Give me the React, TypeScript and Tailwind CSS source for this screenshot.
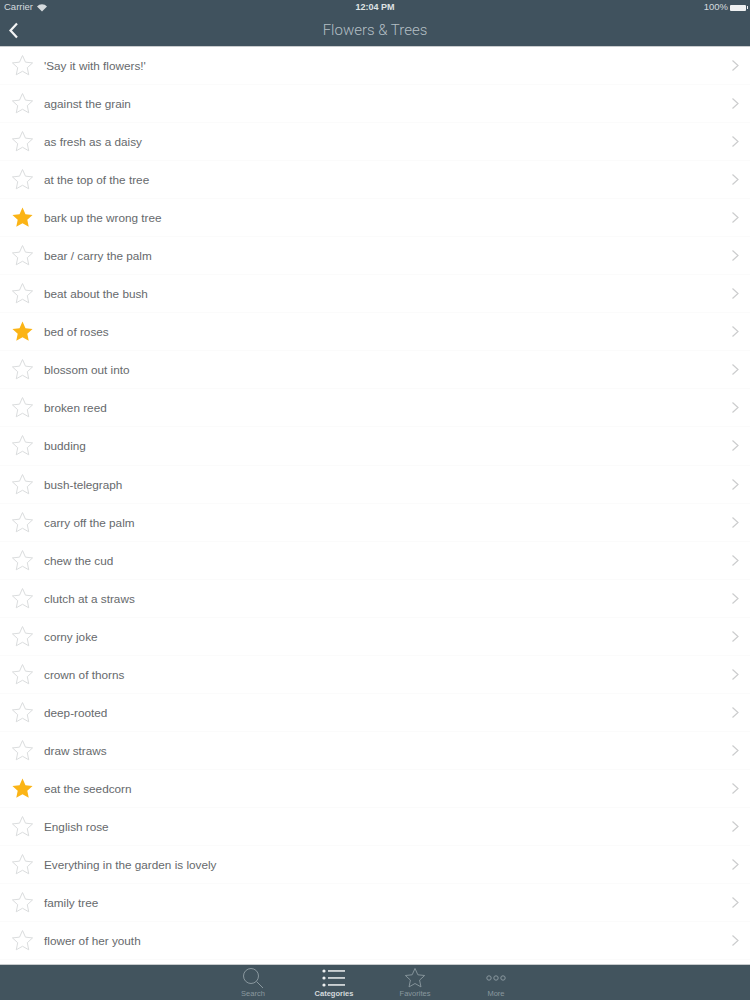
const rows: [string, boolean][] = [
  ["'Say it with flowers!'", false],
  ["against the grain", false],
  ["as fresh as a daisy", false],
  ["at the top of the tree", false],
  ["bark up the wrong tree", true],
  ["bear / carry the palm", false],
  ["beat about the bush", false],
  ["bed of roses", true],
  ["blossom out into", false],
  ["broken reed", false],
  ["budding", false],
  ["bush-telegraph", false],
  ["carry off the palm", false],
  ["chew the cud", false],
  ["clutch at a straws", false],
  ["corny joke", false],
  ["crown of thorns", false],
  ["deep-rooted", false],
  ["draw straws", false],
  ["eat the seedcorn", true],
  ["English rose", false],
  ["Everything in the garden is lovely", false],
  ["family tree", false],
  ["flower of her youth", false],
];

const STAR = "M12 1.6l3.1 6.9 7.4.8-5.5 5 1.5 7.4L12 18l-6.5 3.7L7 14.3l-5.5-5 7.4-.8z";

function Star({ filled }: { filled: boolean }) {
  return (
    <svg width="23" height="23" viewBox="0 0 24 24" className="shrink-0">
      {filled ? (
        <path d={STAR} fill="#fbb416" />
      ) : (
        <path d={STAR} fill="none" stroke="#d8dadb" strokeWidth="1" />
      )}
    </svg>
  );
}

function Row({ label, starred }: { label: string; starred: boolean }) {
  return (
    <div className="h-[38.06px] flex items-center pl-[11px] pr-[10px] border-b border-[#fbfbfb]">
      <Star filled={starred} />
      <span className="ml-[10px] flex-1 text-[11.75px] leading-[16px] mt-[1px] text-[#66696c]">{label}</span>
      <svg width="9" height="13" viewBox="0 0 9 13" className="shrink-0">
        <path d="M1.5 1.5L7 6.5l-5.5 5" fill="none" stroke="#cccdce" strokeWidth="1.2" />
      </svg>
    </div>
  );
}

function TabItem({ label, active, children }: { label: string; active?: boolean; children: React.ReactNode }) {
  return (
    <div className="w-[81px] flex flex-col items-center">
      <div className="h-[23px] flex items-center justify-center">{children}</div>
      <span className={active ? "text-[7.5px] leading-[10px] font-semibold text-[#d5dadd]" : "text-[7.5px] leading-[10px] text-[#8a989f]"}>
        {label}
      </span>
    </div>
  );
}

export default function App() {
  return (
    <div className="w-[750px] h-[1000px] overflow-hidden flex flex-col bg-white font-['Liberation_Sans',sans-serif]">
      <header className="h-[47px] shrink-0 bg-[#40525e] border-b border-[#c9ccce] relative flex items-end justify-center pb-[6px]">
        <div className="absolute top-0 inset-x-0 h-[15px] pl-[4px] pr-[2px] flex items-center justify-between text-[9.5px] text-[#d5dbde]">
          <div className="flex items-center gap-[4px]">
            <span>Carrier</span>
            <svg width="10" height="8" viewBox="0 0 10 8">
              <path d="M5 7.5L0 2.4a7 7 0 0 1 10 0z" fill="#d5dbde" />
            </svg>
          </div>
          <div className="flex items-center gap-[1px]">
            <span className="mr-[1px]">100%</span>
            <div className="w-[16px] h-[6px] bg-[#eef0f1] rounded-[1px]" />
            <div className="w-[1px] h-[3px] bg-[#eef0f1]" />
          </div>
        </div>
        <span className="absolute top-[2px] left-0 right-0 text-center text-[9px] font-bold leading-[11px] text-[#dfe3e5]">12:04 PM</span>
        <svg width="11" height="17" viewBox="0 0 11 17" className="absolute left-[8px] top-[22px]">
          <path d="M9 1.5L2.5 8.5 9 15.5" fill="none" stroke="#f4f5f6" strokeWidth="2.2" />
        </svg>
        <span className="font-['Roboto',sans-serif] font-light text-[15px] leading-[20px] text-[#b3bec4]">Flowers &amp; Trees</span>
      </header>
      <main className="flex-1 overflow-hidden">
        {rows.map(([label, starred]) => (
          <Row key={label} label={label} starred={starred} />
        ))}
      </main>
      <footer className="h-[36px] shrink-0 bg-[#42545e] border-t border-[#c9ccce] flex justify-center pt-[1px]">
        <div className="flex ml-[-1px]">
          <TabItem label="Search">
            <svg width="22" height="22" viewBox="0 0 22 22">
              <circle cx="9" cy="9" r="7.5" fill="none" stroke="#8a989f" strokeWidth="1" />
              <path d="M14.5 14.5L21 21" stroke="#8a989f" strokeWidth="1" />
            </svg>
          </TabItem>
          <TabItem label="Categories" active>
            <svg width="24" height="20" viewBox="0 0 24 20">
              <g fill="#eef0f1">
                <circle cx="2" cy="3" r="1.6" />
                <circle cx="2" cy="10" r="1.6" />
                <circle cx="2" cy="17" r="1.6" />
                <rect x="6" y="2.2" width="17" height="1.5" />
                <rect x="6" y="9.2" width="17" height="1.5" />
                <rect x="6" y="16.2" width="17" height="1.5" />
              </g>
            </svg>
          </TabItem>
          <TabItem label="Favorites">
            <svg width="22" height="22" viewBox="0 0 24 24">
              <path d={STAR} fill="none" stroke="#8a989f" strokeWidth="1" />
            </svg>
          </TabItem>
          <TabItem label="More">
            <svg width="20" height="6" viewBox="0 0 20 6">
              <g fill="none" stroke="#8a989f" strokeWidth="1">
                <circle cx="3" cy="3" r="2.2" />
                <circle cx="10" cy="3" r="2.2" />
                <circle cx="17" cy="3" r="2.2" />
              </g>
            </svg>
          </TabItem>
        </div>
      </footer>
    </div>
  );
}
